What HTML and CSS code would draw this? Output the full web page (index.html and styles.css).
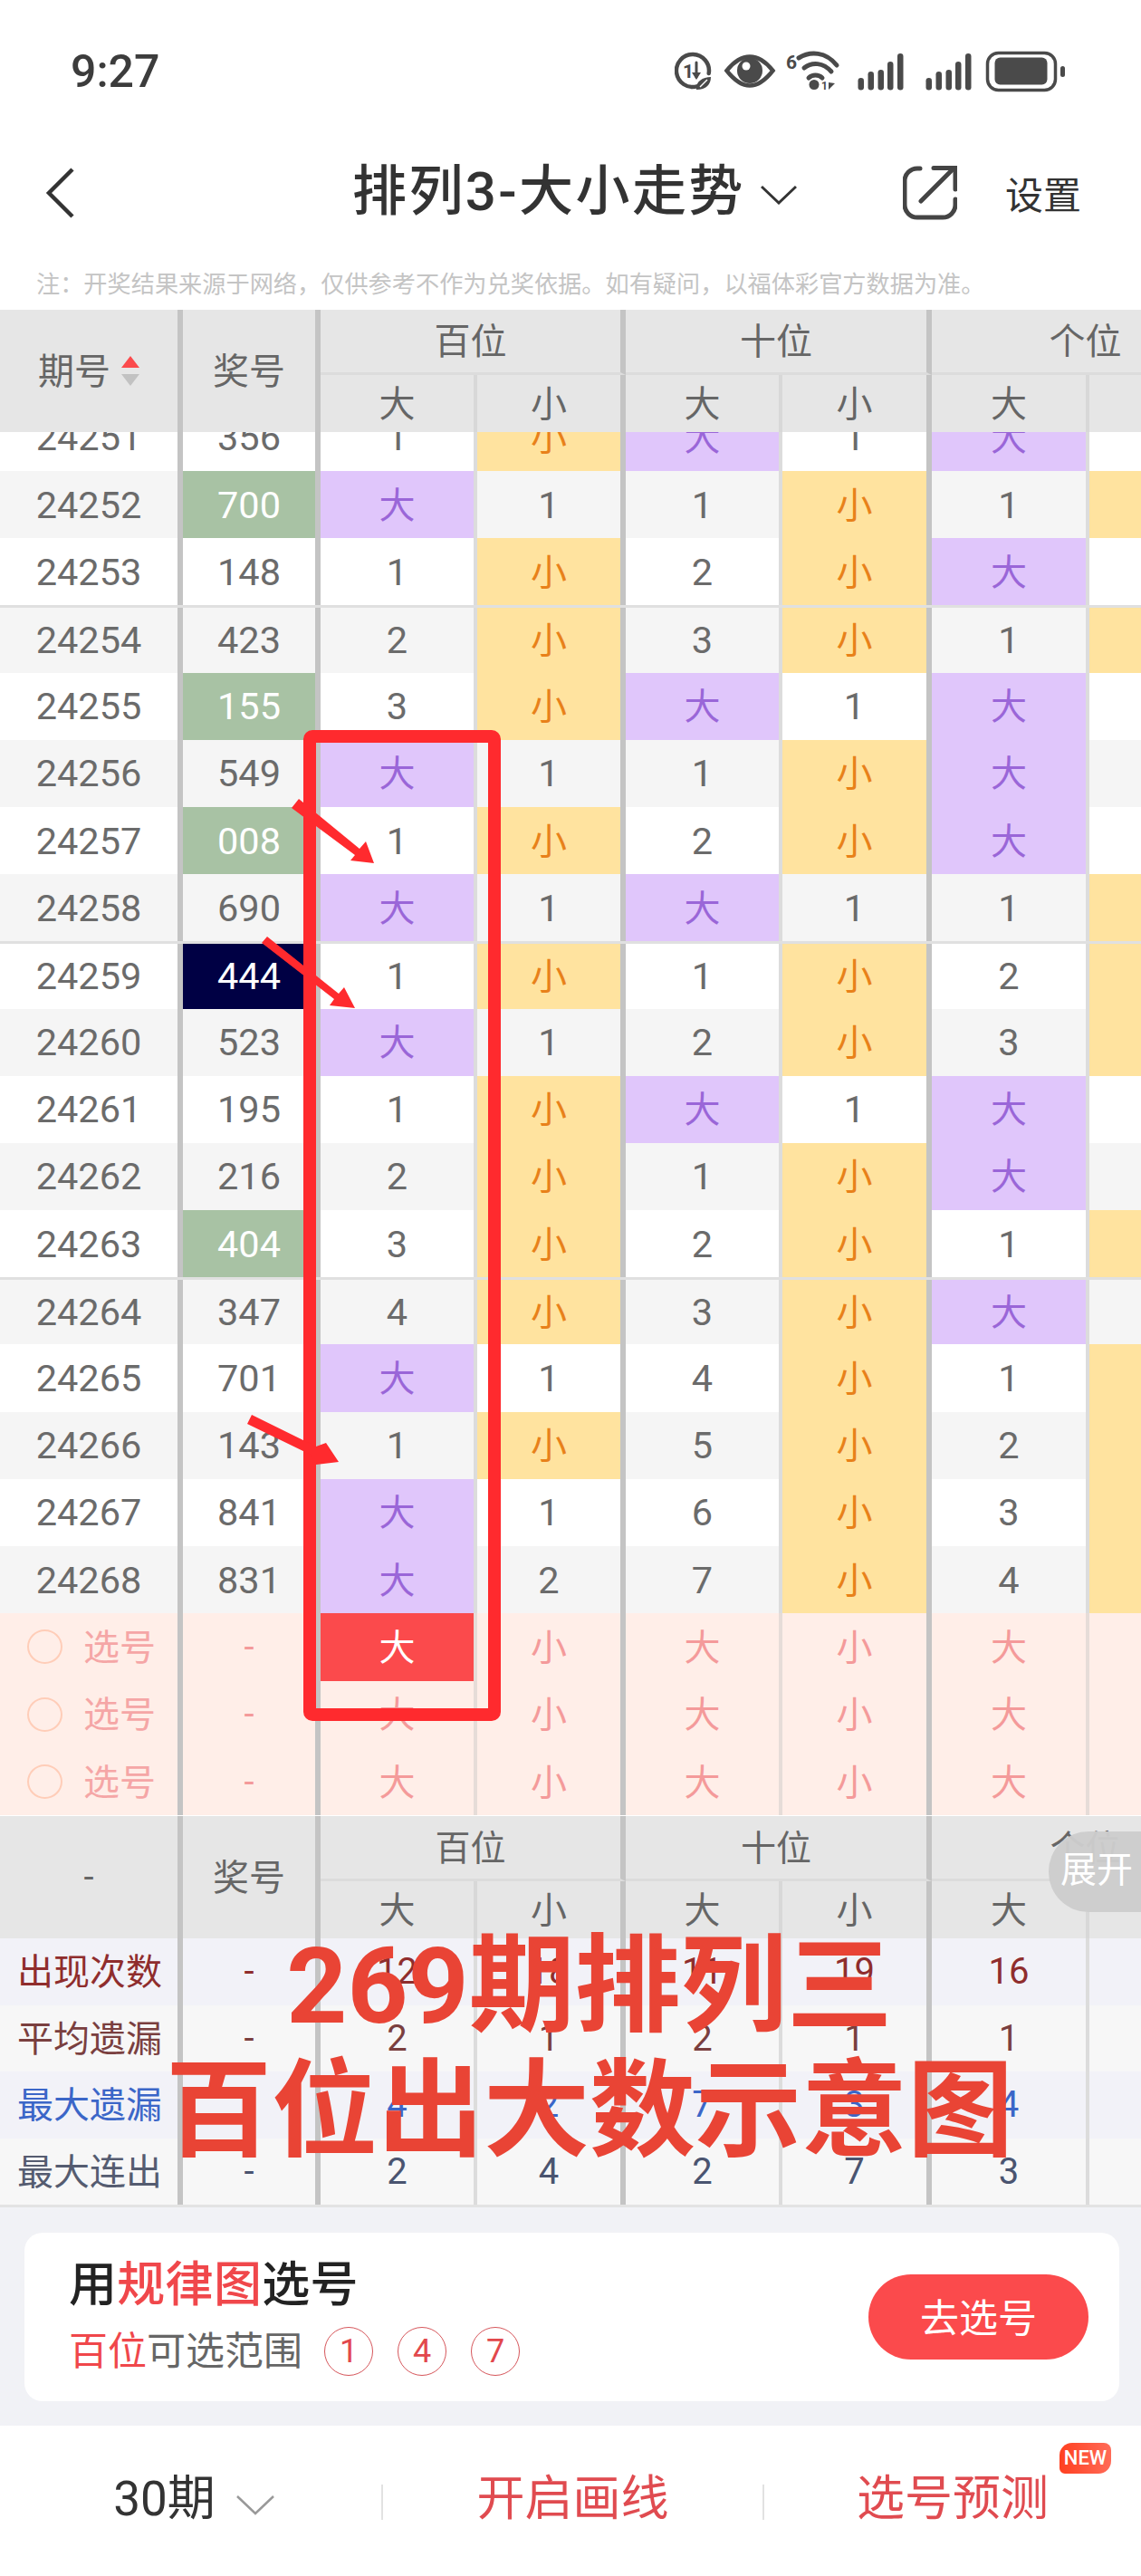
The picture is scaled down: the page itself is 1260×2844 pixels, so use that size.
FILE: index.html
```html
<!DOCTYPE html>
<html lang="zh-CN">
<head>
<meta charset="utf-8">
<title>排列3-大小走势</title>
<link rel="stylesheet" href="styles.css">
</head>
<body>
<div class="page">
  <div class="status">
    <span class="time">9:27</span>
    <svg class="status-icons" viewBox="745 50 431 55" width="431" height="55">
      <g fill="none" stroke="#4a4a4a" stroke-width="4.5" stroke-linecap="round">
        <path d="M782.7 80A18 18 0 1 0 769.7 94.4"/>
        <path d="M769 68V84" stroke-width="3"/>
        <path d="M802.500 77C812 65 820 61.500 828 61.500S844 65 853.500 77C844 89 836 93.500 828 93.500S812 89 802.500 77Z"/>
        <path d="M882 63C895 55 912 56 924 71" stroke-width="5"/>
        <path d="M888 74C897 67 909 68 918 78" stroke-width="5"/>
        <path d="M893 85C897 81 904 81 908 85" stroke-width="5"/>
      </g>
      <g fill="#4a4a4a">
        <text class="si" x="754" y="85" font-size="21">1</text>
        <path d="M764 79L769 87L774 79Z"/>
        <path d="M769 98C768 89 776 84 785 84C785 92 780 98 769 98Z"/>
        <circle cx="828" cy="77" r="14"/>
        <text class="si" x="868" y="75" font-size="21">6</text>
        <circle cx="899" cy="92.500" r="5.500"/>
        <text class="si" x="907" y="98" font-size="12">1</text>
        <path d="M915 90L915 98L922 91Z"/>
        <rect x="947.500" y="85" width="6.500" height="13.500" rx="3.200"/>
        <rect x="958.500" y="78" width="6.500" height="20.500" rx="3.200"/>
        <rect x="969.500" y="76" width="6.500" height="22.500" rx="3.200"/>
        <rect x="980" y="67" width="6.500" height="31.500" rx="3.200"/>
        <rect x="991" y="58" width="6.500" height="40.500" rx="3.200"/>
        <rect x="1022.500" y="85" width="6.500" height="13.500" rx="3.200"/>
        <rect x="1033.500" y="78" width="6.500" height="20.500" rx="3.200"/>
        <rect x="1044.500" y="76" width="6.500" height="22.500" rx="3.200"/>
        <rect x="1055" y="67" width="6.500" height="31.500" rx="3.200"/>
        <rect x="1066" y="58" width="6.500" height="40.500" rx="3.200"/>
        <rect x="1098.500" y="62.500" width="58" height="30" rx="6"/>
        <rect x="1171" y="72" width="5" height="12" rx="2.500"/>
      </g>
      <circle cx="824" cy="72" r="4.500" fill="#fff"/>
      <path d="M773 95L781 87" stroke="#fff" stroke-width="1.500"/>
      <rect x="1090.500" y="57.500" width="75" height="41" rx="12" fill="none" stroke="#4a4a4a" stroke-width="3.500"/>
    </svg>
  </div>

  <div class="nav">
    <svg class="back" viewBox="0 0 36 56" width="36" height="56"><path d="M30 2L4 28L30 54" fill="none" stroke="#333" stroke-width="4.500"/></svg>
    <h1 class="title">排列3-大小走势</h1>
    <svg class="title-caret" viewBox="0 0 40 22" width="40" height="22"><path d="M1 2L20 20L39 2" fill="none" stroke="#333" stroke-width="3"/></svg>
    <svg class="share" viewBox="997 183 60 60" width="60" height="60"><g fill="none" stroke="#444" stroke-width="5" stroke-linecap="round"><path d="M1016 186H1013A14 14 0 0 0 999 200V226A14 14 0 0 0 1013 240H1041A14 14 0 0 0 1055 226V220"/><path d="M1017 222L1053 186"/><path d="M1031 185.500H1055V209"/></g></svg>
    <span class="settings">设置</span>
  </div>

  <p class="note">注：开奖结果来源于网络，仅供参考不作为兑奖依据。如有疑问，以福体彩官方数据为准。</p>

  <div class="table">
    <div class="head">
      <div class="hc span2 t col-issue">期号<span class="sort"><i class="up"></i><i class="down"></i></span></div>
      <div class="hc span2 t">奖号</div>
      <div class="hc group t">百位</div>
      <div class="hc group t">十位</div>
      <div class="hc group">个位</div>
      <div class="hc sub h">大</div><div class="hc sub t">小</div>
      <div class="hc sub h">大</div><div class="hc sub t">小</div>
      <div class="hc sub h">大</div><div class="hc sub"></div>
    </div>

    <div class="body">
      <div class="rows">
        <div class="row"><div>24251</div><div>356</div><div>1</div><div class="s">小</div><div class="b">大</div><div>1</div><div class="b">大</div><div></div></div>
        <div class="row even"><div>24252</div><div class="g">700</div><div class="b">大</div><div>1</div><div>1</div><div class="s">小</div><div>1</div><div class="s"></div></div>
        <div class="row"><div>24253</div><div>148</div><div>1</div><div class="s">小</div><div>2</div><div class="s">小</div><div class="b">大</div><div></div></div>
        <div class="row even line"><div>24254</div><div>423</div><div>2</div><div class="s">小</div><div>3</div><div class="s">小</div><div>1</div><div class="s"></div></div>
        <div class="row"><div>24255</div><div class="g">155</div><div>3</div><div class="s">小</div><div class="b">大</div><div>1</div><div class="b">大</div><div></div></div>
        <div class="row even"><div>24256</div><div>549</div><div class="b">大</div><div>1</div><div>1</div><div class="s">小</div><div class="b">大</div><div></div></div>
        <div class="row"><div>24257</div><div class="g">008</div><div>1</div><div class="s">小</div><div>2</div><div class="s">小</div><div class="b">大</div><div></div></div>
        <div class="row even"><div>24258</div><div>690</div><div class="b">大</div><div>1</div><div class="b">大</div><div>1</div><div>1</div><div class="s"></div></div>
        <div class="row line"><div>24259</div><div class="n">444</div><div>1</div><div class="s">小</div><div>1</div><div class="s">小</div><div>2</div><div class="s"></div></div>
        <div class="row even"><div>24260</div><div>523</div><div class="b">大</div><div>1</div><div>2</div><div class="s">小</div><div>3</div><div class="s"></div></div>
        <div class="row"><div>24261</div><div>195</div><div>1</div><div class="s">小</div><div class="b">大</div><div>1</div><div class="b">大</div><div></div></div>
        <div class="row even"><div>24262</div><div>216</div><div>2</div><div class="s">小</div><div>1</div><div class="s">小</div><div class="b">大</div><div></div></div>
        <div class="row"><div>24263</div><div class="g">404</div><div>3</div><div class="s">小</div><div>2</div><div class="s">小</div><div>1</div><div class="s"></div></div>
        <div class="row even line"><div>24264</div><div>347</div><div>4</div><div class="s">小</div><div>3</div><div class="s">小</div><div class="b">大</div><div></div></div>
        <div class="row"><div>24265</div><div>701</div><div class="b">大</div><div>1</div><div>4</div><div class="s">小</div><div>1</div><div class="s"></div></div>
        <div class="row even"><div>24266</div><div>143</div><div>1</div><div class="s">小</div><div>5</div><div class="s">小</div><div>2</div><div class="s"></div></div>
        <div class="row"><div>24267</div><div>841</div><div class="b">大</div><div>1</div><div>6</div><div class="s">小</div><div>3</div><div class="s"></div></div>
        <div class="row even"><div>24268</div><div>831</div><div class="b">大</div><div>2</div><div>7</div><div class="s">小</div><div>4</div><div class="s"></div></div>
        <div class="row pick"><div class="pick-label"><i class="radio"></i>选号</div><div class="dash">-</div><div class="chosen">大</div><div>小</div><div>大</div><div>小</div><div>大</div><div></div></div>
        <div class="row pick"><div class="pick-label"><i class="radio"></i>选号</div><div class="dash">-</div><div>大</div><div>小</div><div>大</div><div>小</div><div>大</div><div></div></div>
        <div class="row pick"><div class="pick-label"><i class="radio"></i>选号</div><div class="dash">-</div><div>大</div><div>小</div><div>大</div><div>小</div><div>大</div><div></div></div>
      </div>
    </div>

    <div class="head foot-head">
      <div class="hc span2 t dash-head">-</div>
      <div class="hc span2 t">奖号</div>
      <div class="hc group t">百位</div>
      <div class="hc group t">十位</div>
      <div class="hc group">个位</div>
      <div class="hc sub h">大</div><div class="hc sub t">小</div>
      <div class="hc sub h">大</div><div class="hc sub t">小</div>
      <div class="hc sub h">大</div><div class="hc sub"></div>
      <span class="expand">展开</span>
    </div>

    <div class="row stat s-count"><div>出现次数</div><div>-</div><div>12</div><div>18</div><div>11</div><div>19</div><div>16</div><div></div></div>
    <div class="row stat s-avg"><div>平均遗漏</div><div>-</div><div>2</div><div>1</div><div>2</div><div>1</div><div>1</div><div></div></div>
    <div class="row stat s-max"><div>最大遗漏</div><div>-</div><div>4</div><div>2</div><div>7</div><div>3</div><div>4</div><div></div></div>
    <div class="row stat s-run"><div>最大连出</div><div>-</div><div>2</div><div>4</div><div>2</div><div>7</div><div>3</div><div></div></div>
  </div>

  <div class="panel">
    <div class="card">
      <div class="card-text">
        <div class="card-title">用<em>规律图</em>选号</div>
        <div class="card-sub"><em>百位</em>可选范围<span class="ball first">1</span><span class="ball">4</span><span class="ball">7</span></div>
      </div>
      <button class="go">去选号</button>
    </div>
  </div>

  <div class="bar">
    <div class="seg period">30期<svg class="period-caret" viewBox="0 0 42 22" width="42" height="22"><path d="M1 1L21 20L41 1" fill="none" stroke="#999" stroke-width="2.500"/></svg></div>
    <i class="sep"></i>
    <div class="seg action">开启画线</div>
    <i class="sep"></i>
    <div class="seg action"><span class="predict">选号预测<b class="new">NEW</b></span></div>
  </div>

  <svg class="marks" viewBox="0 0 1260 2844" width="1260" height="2844" aria-hidden="true">
    <rect x="342" y="813" width="204" height="1080" rx="3" fill="none" stroke="#ff2a2e" stroke-width="14"/>
    <polygon fill="#ff2a2e" points="330,882 397,937 404,929 413,953 387,950 392,944 322,892"/>
    <polygon fill="#ff2a2e" points="295,1034 374,1097 380,1090 392,1113 364,1110 369,1103 289,1041"/>
    <polygon fill="#ff2a2e" points="278,1562 349,1597 360,1593 374,1614 349,1617 343,1606 273,1572"/>
  </svg>
  <div class="caption">269期排列三<br>百位出大数示意图</div>
</div>
</body>
</html>
```

FILE: styles.css
```css
* { box-sizing: border-box; }
html, body { margin: 0; padding: 0; background: #fff; }
body { font-family: Roboto, "Noto Sans CJK SC", sans-serif; color: #333; }
.page { position: relative; width: 1260px; height: 2844px; overflow: hidden; }

/* status bar */
.status { display: flex; align-items: center; height: 156px; padding-left: 78px; }
.time { font-size: 50px; font-weight: 500; color: #3c3c3c; width: 667px; padding-top: 2px; }
.si { font-family: Roboto, sans-serif; font-weight: 700; }
.status-icons { display: block; }

/* nav */
.nav { display: flex; align-items: center; height: 112px; padding-left: 50px; }
.back { margin-top: 2px; }
.title { margin: 0 0 0 303px; font-size: 60px; font-weight: 500; line-height: 70px; color: #333; width: 427px; white-space: nowrap; letter-spacing: 2.400px; }
.title-caret { margin-left: 24px; margin-top: 5px; }
.share { margin-left: 117px; margin-top: 1px; }
.settings { margin-left: 53px; font-size: 42px; color: #333; }

.note { margin: 0; height: 74px; padding: 30px 0 0 40px; font-size: 26.200px; line-height: 32px; color: #c4c4c4; white-space: nowrap; }

/* table */
.table { width: 1260px; overflow: hidden; }
.head, .row { display: grid; width: 1368px; grid-template-columns: 202px 152px 173px 164px 173px 165px 174px 165px; }
.head { grid-template-rows: 72px 63px; height: 135px; background: #e6e6e6; color: #666; position: relative; }
.hc { display: flex; align-items: center; justify-content: center; font-size: 40px; padding-bottom: 6px; }
.span2 { grid-row: span 2; }
.group { grid-column: span 2; border-bottom: 3px solid #dcdcdc; }
.t { border-right: 6px solid #c4c4c4; }
.h { border-right: 4px solid #d8d8d8; }
.col-issue { justify-content: flex-start; padding-left: 42px; }
.sort { display: flex; flex-direction: column; gap: 7px; margin-left: 12px; margin-top: 6px; }
.sort i { display: block; width: 0; height: 0; border-left: 10px solid transparent; border-right: 10px solid transparent; }
.up { border-bottom: 13px solid #fb4a4c; }
.down { border-top: 13px solid #c2c2c2; }

.body { height: 1528px; overflow: hidden; }
.rows { margin-top: -31.200px; }
.row { height: 74.200px; background: #fff; color: #6b6b6b; font-size: 41.500px; }
.row.even { background: #f5f5f5; }
.row.line { border-top: 3px solid #e0e0e0; }
.row > div { display: flex; align-items: center; justify-content: center; }
.row > div:nth-child(1), .row > div:nth-child(2), .row > div:nth-child(4), .row > div:nth-child(6) { border-right: 6px solid #c4c4c4; }
.row > div:nth-child(3), .row > div:nth-child(5), .row > div:nth-child(7) { border-right: 4px solid #dcdcdc; }
.row .b { background: #e0c6fb; color: #9a66d8; font-size: 40px; background-clip: padding-box; padding-bottom: 5px; }
.row .s { background: #ffe39f; color: #e8811a; font-size: 40px; background-clip: padding-box; padding-bottom: 5px; }
.row .g { background: #a8c2a4; color: #fff; background-clip: padding-box; }
.row .n { background: #000044; color: #fff; background-clip: padding-box; }

.row.pick { height: 74.400px; background: #ffeee8; color: #f49a9a; font-size: 40px; }
.row.pick > div { padding-bottom: 5px; }
.row.pick > .dash { padding-bottom: 0; }
.row.pick > div:nth-child(3), .row.pick > div:nth-child(5), .row.pick > div:nth-child(7) { border-right-color: #e6dcd8; }
.row.pick > .pick-label { justify-content: flex-start; padding-left: 30px; gap: 23px; color: #f5a6a6; }
.radio { display: block; width: 39px; height: 38px; margin-top: 5px; border: 2px solid #ffcdb8; border-radius: 50%; }
.row.pick > .chosen { background: #fb4a4c; color: #fff; background-clip: padding-box; }

.foot-head .group { font-size: 39px; }
.dash-head { padding-bottom: 0; }
.expand { position: absolute; left: 1158px; top: 17px; width: 102px; height: 89px; border-radius: 44px 0 0 44px; background: rgba(205, 205, 205, .96); color: #fff; font-size: 40px; line-height: 86px; padding-left: 13px; white-space: nowrap; overflow: hidden; }

.stat { height: 73.500px; font-size: 40px; }
.stat > div:first-child { padding-bottom: 5px; padding-left: 2px; }
.s-count { background: #f2f2f8; color: #8f2d2d; }
.s-avg { background: #f7f7f7; color: #7a3f3f; }
.s-max { background: #f2f2f8; color: #3b66c8; }
.s-run { background: #f7f7f7; color: #4a5470; height: 76px; border-bottom: 3px solid #e3e3e3; }
.s-run > div:first-child { color: #555c70; }

/* card */
.panel { height: 241px; background: #f1f2f6; padding: 28px 24px 0 27px; }
.card { display: flex; align-items: center; justify-content: space-between; height: 186px; background: #fff; border-radius: 20px; padding: 0 34px 0 49px; }
.card em { font-style: normal; color: #f0474b; }
.card-title { font-size: 53px; line-height: 60px; font-weight: 500; color: #222; padding-top: 1px; letter-spacing: .3px; }
.card-sub { display: flex; align-items: center; margin-top: 15px; font-size: 43px; line-height: 56px; color: #666; }
.ball { display: flex; align-items: center; justify-content: center; width: 54px; height: 54px; margin-left: 27px; border: 1.500px solid #d6565b; border-radius: 50%; color: #e2484c; font-size: 36px; }
.ball.first { margin-left: 24px; }
.go { width: 243px; height: 94px; border: 0; border-radius: 47px; background: #fb4a4c; color: #fff; font: 43px Roboto, "Noto Sans CJK SC", sans-serif; padding-bottom: 4px; }

/* bottom bar */
.bar { display: flex; align-items: flex-start; height: 167px; padding-top: 51px; background: #fff; }
.seg { display: flex; justify-content: center; align-items: center; height: 60px; font-size: 53px; line-height: 60px; }
.seg:nth-child(3) { width: 419px; }
.seg:nth-child(5) { width: 416px; }
.period { color: #333; padding-left: 7px; }
.period-caret { margin-left: 23px; margin-top: 14px; }
.sep { display: block; width: 2px; height: 39px; margin-top: 14px; background: #e2e2e2; }
.seg.period { width: 421px; }
.action { color: #e04b50; }
.predict { position: relative; display: block; white-space: nowrap; }
.new { position: absolute; left: 224px; top: -32px; width: 57px; height: 34px; border-radius: 14px 8px 14px 6px; background: linear-gradient(90deg, #ff4020, #ff6b58); color: #fff; font-size: 22px; font-weight: 500; line-height: 34px; text-align: center; }

/* annotations painted on the photo */
.marks { position: absolute; left: 0; top: 0; pointer-events: none; }
.caption { position: absolute; left: 100px; top: 2124px; width: 1102px; color: #e94435; font-size: 117px; font-weight: 700; line-height: 138px; text-align: center; white-space: nowrap; }
```
